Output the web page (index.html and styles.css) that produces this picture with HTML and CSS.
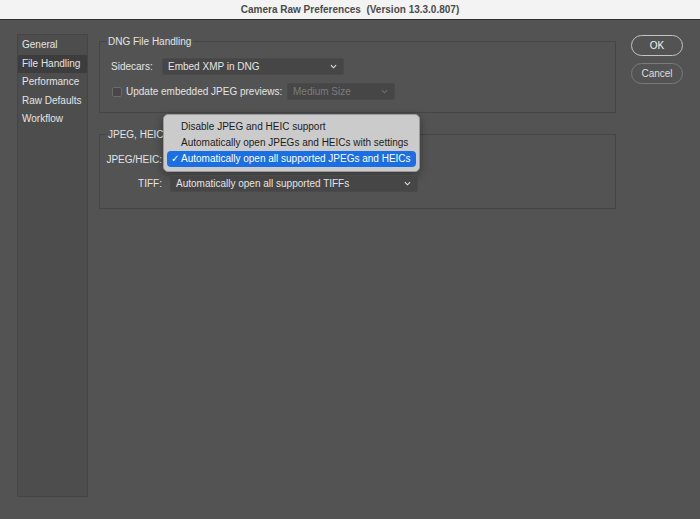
FILE: index.html
```html
<!DOCTYPE html>
<html lang="en">
<head>
    <meta charset="UTF-8">
    <meta name="viewport" content="width=device-width, initial-scale=1.0">
    <title>Camera Raw Preferences</title>
    <link rel="stylesheet" href="styles.css">
</head>
<body>
    <div class="titlebar">Camera Raw Preferences&nbsp; (Version 13.3.0.807)</div>

    <div class="dialog">
        <ul class="sidebar">
            <li>General</li>
            <li class="active">File Handling</li>
            <li>Performance</li>
            <li>Raw Defaults</li>
            <li>Workflow</li>
        </ul>

        <div class="panel">
            <fieldset class="group group-dng">
                <legend>DNG File Handling</legend>
                <div class="row">
                    <span class="label label-sidecars">Sidecars:</span>
                    <div class="select select-sidecars">
                        <span>Embed XMP in DNG</span>
                        <svg class="chevron" viewBox="0 0 8 5"><polyline points="1,1 4,4 7,1"/></svg>
                    </div>
                </div>
                <div class="row">
                    <span class="checkbox"></span>
                    <span class="label label-preview">Update embedded JPEG previews:</span>
                    <div class="select select-preview disabled">
                        <span>Medium Size</span>
                        <svg class="chevron" viewBox="0 0 8 5"><polyline points="1,1 4,4 7,1"/></svg>
                    </div>
                </div>
            </fieldset>

            <fieldset class="group group-jpeg">
                <legend>JPEG, HEIC, and TIFF Handling</legend>
                <div class="row row-jpeg">
                    <span class="label label-right">JPEG/HEIC:</span>
                    <div class="select select-wide">
                        <span>Automatically open all supported JPEGs and HEICs</span>
                        <svg class="chevron" viewBox="0 0 8 5"><polyline points="1,1 4,4 7,1"/></svg>
                    </div>
                    <ul class="menu">
                        <li>Disable JPEG and HEIC support</li>
                        <li>Automatically open JPEGs and HEICs with settings</li>
                        <li class="selected"><span class="check">&#10003;</span>Automatically open all supported JPEGs and HEICs</li>
                    </ul>
                </div>
                <div class="row">
                    <span class="label label-right">TIFF:</span>
                    <div class="select select-wide">
                        <span>Automatically open all supported TIFFs</span>
                        <svg class="chevron" viewBox="0 0 8 5"><polyline points="1,1 4,4 7,1"/></svg>
                    </div>
                </div>
            </fieldset>
        </div>

        <div class="actions">
            <button class="btn btn-default">OK</button>
            <button class="btn">Cancel</button>
        </div>
    </div>
</body>
</html>
```

FILE: styles.css
```css
:root {
    --bg-window: #535353;
    --bg-sidebar: #4d4d4d;
    --bg-active: #3d3d3d;
    --bg-field: #464646;
    --border-dark: #454545;
    --border-field: #4a4a4a;
    --text-primary: #e4e4e4;
    --text-disabled: #7c7c7c;
    --menu-bg: #cbcbcb;
    --menu-accent: #1b6fe3;
}

* {
    margin: 0;
    padding: 0;
    box-sizing: border-box;
}

body {
    background: var(--bg-window);
    color: var(--text-primary);
    font-family: "Liberation Sans", Arial, sans-serif;
    font-size: 10px;
    height: 100vh;
    overflow: hidden;
}

.titlebar {
    height: 20px;
    background: #f3f3f3;
    border-bottom: 1px solid #2e2e2e;
    color: #4a4a4a;
    font-weight: bold;
    font-size: 10px;
    line-height: 19px;
    text-align: center;
}

.dialog {
    display: flex;
    padding: 14px 17px 22px 17px;
    height: calc(100% - 20px);
}

.sidebar {
    list-style: none;
    width: 71px;
    background: var(--bg-sidebar);
    border: 1px solid var(--border-dark);
    padding-top: 1px;
}

.sidebar li {
    height: 18.5px;
    line-height: 18.5px;
    padding-left: 4px;
    white-space: nowrap;
}

.sidebar li.active {
    background: var(--bg-active);
}

.panel {
    flex: 0 0 517px;
    margin-left: 11px;
    padding-top: 1px;
    display: flex;
    flex-direction: column;
    gap: 15px;
}

.group {
    border: 1px solid var(--border-dark);
    padding: 0 0 0 11px;
    min-width: 0;
}

.group legend {
    margin-left: -5px;
    padding: 0 2px;
    line-height: 13px;
}

.group-dng {
    height: 78px;
    padding-top: 10px;
}

.group-jpeg {
    height: 81px;
    padding-top: 10px;
}

.row {
    display: flex;
    align-items: center;
    height: 17px;
    margin-bottom: 8px;
    position: relative;
}

.label {
    white-space: nowrap;
    flex-shrink: 0;
}

.label-sidecars {
    width: 51px;
}

.label-preview {
    width: 161px;
}

.label-right {
    width: 51px;
    display: flex;
    justify-content: flex-end;
    margin-right: 8px;
}

.row-jpeg {
    margin-bottom: 7px;
}

.select {
    display: flex;
    align-items: center;
    justify-content: space-between;
    height: 17px;
    padding: 0 6px 0 5px;
    background: var(--bg-field);
    border: 1px solid var(--border-field);
    border-radius: 2px;
    white-space: nowrap;
}

.select-sidecars {
    width: 182px;
}

.select-preview {
    width: 108px;
}

.select-wide {
    width: 248px;
}

.select.disabled {
    color: var(--text-disabled);
}

.chevron {
    width: 7px;
    height: 5px;
    fill: none;
    stroke: currentColor;
    stroke-width: 1.2;
}

.select.disabled .chevron {
    stroke: #6e6e6e;
}

.checkbox {
    width: 10px;
    height: 10px;
    background: #474747;
    border: 1px solid #6a6a6a;
    border-radius: 2px;
    margin: 0 4px 0 1px;
}

.menu {
    position: absolute;
    left: 52px;
    top: -37px;
    width: 257px;
    list-style: none;
    background: var(--menu-bg);
    border: 1px solid #9a9a9a;
    border-radius: 5px;
    padding: 4px 3px;
    box-shadow: 0 3px 10px rgb(0 0 0 / 0.35);
    color: #1c1c1c;
}

.menu li {
    height: 16px;
    line-height: 16px;
    padding-left: 14px;
    border-radius: 4px;
    white-space: nowrap;
    position: relative;
}

.menu li.selected {
    background: var(--menu-accent);
    color: #fff;
}

.check {
    position: absolute;
    left: 4px;
    font-size: 10px;
}

.actions {
    display: flex;
    flex-direction: column;
    gap: 7px;
    margin-left: 15px;
    padding-top: 1px;
}

.btn {
    width: 52px;
    height: 21px;
    border-radius: 11px;
    background: transparent;
    border: 1px solid #7a7a7a;
    color: #dedede;
    font-family: inherit;
    font-size: 10px;
}

.btn-default {
    border: 1.5px solid #c4c4c4;
    color: #f2f2f2;
}
```
